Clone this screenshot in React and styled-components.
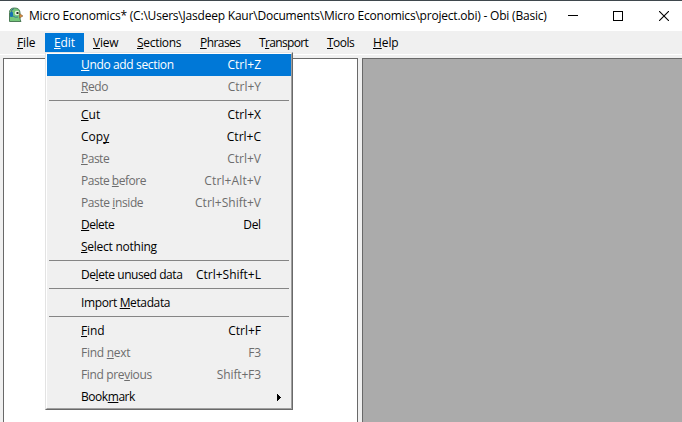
import React from "react";
import styled, { createGlobalStyle } from "styled-components";

const GlobalStyle = createGlobalStyle`
  * { box-sizing: border-box; }
  body {
    margin: 0;
    overflow: hidden;
    font: 12px/16px "Open Sans", "Noto Sans", sans-serif;
    color: #000;
  }
`;

const Window = styled.div`
  display: flex;
  flex-direction: column;
  width: 682px;
  height: 422px;
  background: #f0f0f0;
`;

const TitleBar = styled.header`
  display: flex;
  align-items: center;
  height: 31px;
  padding-left: 8px;
  background: #fff;
  border-top: 1px solid #3f484d;
`;

const AppIcon = styled.svg`
  flex: none;
  margin-bottom: 2px;
`;

const Title = styled.h1`
  flex: 1;
  min-width: 0;
  margin: 0 0 0 5px;
  font-size: 12px;
  line-height: 16px;
  font-weight: 400;
  white-space: nowrap;
  letter-spacing: ${(p) => p.$track}px;
`;

const Controls = styled.div`
  display: flex;
  flex: none;
  margin-right: -5px;
`;

const ControlButton = styled.button`
  display: grid;
  place-items: center;
  width: 46px;
  height: 30px;
  padding: 0;
  border: 0;
  background: none;
`;

const MenuBar = styled.nav`
  display: flex;
  height: 24px;
  padding: 2px 0 0 6px;
  border-bottom: 1px solid #fff;
`;

const MenuTab = styled.div`
  position: relative;
  width: ${(p) => p.$width}px;
  height: 19px;
  padding-left: ${(p) => p.$pad}px;
  line-height: 20px;
  white-space: nowrap;
  letter-spacing: ${(p) => p.$track}px;
  color: ${(p) => (p.$open ? "#fff" : "#000")};
  background: ${(p) => (p.$open ? "#0078d7" : "transparent")};
`;

const Key = styled.span`
  text-decoration: underline;
  text-decoration-thickness: 1px;
  text-underline-offset: 1px;
  text-decoration-skip-ink: none;
`;

const Menu = styled.div`
  position: absolute;
  z-index: 2;
  top: 19px;
  left: 0;
  width: 248px;
  border: 1px solid #e3e3e3;
  border-right-color: #696969;
  border-bottom-color: #696969;
  color: #000;
`;

const MenuInner = styled.div`
  border: 1px solid #fff;
  border-right-color: #a0a0a0;
  border-bottom-color: #a0a0a0;
  background: #f0f0f0;
`;

const MenuItem = styled.div`
  display: flex;
  justify-content: space-between;
  align-items: center;
  height: 22px;
  padding: 0 30px 0 34px;
  line-height: 22px;
  color: ${(p) => (p.$active ? "#fff" : p.$disabled ? "#6d6d6d" : "#000")};
  background: ${(p) => (p.$active ? "#0078d7" : "transparent")};
`;

const Label = styled.span`
  letter-spacing: ${(p) => p.$track || 0}px;
`;

const Shortcut = styled.span`
  letter-spacing: ${(p) => p.$track || 0}px;
  margin-right: ${(p) => -(p.$track || 0)}px;
`;

const Separator = styled.div`
  height: 1px;
  margin: 2px 2px 3px;
  background: #858585;
`;

const SubmenuArrow = styled.svg`
  margin-right: -20px;
`;

const Workspace = styled.main`
  display: flex;
  flex: 1;
  gap: 4px;
  padding: 3px 0 0 3px;
`;

const Pane = styled.section`
  width: ${(p) => (p.$wide ? "auto" : "355px")};
  flex: ${(p) => (p.$wide ? 1 : "none")};
  border: solid #696969;
  border-width: ${(p) => (p.$wide ? "1px 0 0 1px" : "1px 1px 0 1px")};
  background: ${(p) => (p.$wide ? "#ababab" : "#fff")};
`;

const mnemonic = (text) => {
  const i = text.indexOf("&");
  return (
    <>
      {text.slice(0, i)}
      <Key>{text[i + 1]}</Key>
      {text.slice(i + 2)}
    </>
  );
};

const tabs = [
  { text: "&File", width: 39, pad: 11, track: -0.15 },
  { text: "&Edit", width: 39, pad: 9, open: true, track: -0.1 },
  { text: "&View", width: 44, pad: 9, track: -0.2 },
  { text: "&Sections", width: 63, pad: 9, track: -0.3 },
  { text: "&Phrases", width: 59, pad: 9, track: -0.55 },
  { text: "T&ransport", width: 68, pad: 9, track: -0.65 },
  { text: "&Tools", width: 46, pad: 9, track: -0.5 },
  { text: "&Help", width: 44, pad: 9, track: -0.1 },
];

const items = [
  { text: "&Undo add section", key: "Ctrl+Z", active: true, track: -0.35 },
  { text: "&Redo", key: "Ctrl+Y", disabled: true, track: -0.45 },
  null,
  { text: "&Cut", key: "Ctrl+X" },
  { text: "Cop&y", key: "Ctrl+C" },
  { text: "&Paste", key: "Ctrl+V", disabled: true, track: -0.5 },
  { text: "Paste &before", key: "Ctrl+Alt+V", disabled: true, track: -0.48, keyTrack: 0.12 },
  { text: "Paste &inside", key: "Ctrl+Shift+V", disabled: true, track: -0.4 },
  { text: "&Delete", key: "Del", track: -0.5, keyTrack: -0.4 },
  { text: "&Select nothing", track: -0.25 },
  null,
  { text: "De&lete unused data", key: "Ctrl+Shift+L", track: -0.44 },
  null,
  { text: "Import &Metadata", track: -0.38 },
  null,
  { text: "&Find", key: "Ctrl+F", track: -0.1 },
  { text: "Find &next", key: "F3", disabled: true, track: -0.27, keyTrack: -0.4 },
  { text: "Find pre&vious", key: "Shift+F3", disabled: true, track: -0.35, keyTrack: -0.15 },
  { text: "Book&mark", submenu: true, track: -0.45 },
];

const BirdIcon = () => (
  <AppIcon width="16" height="16" viewBox="0 0 16 16">
    <path d="M1.5 14.5V5.5Q1.5 1 6.5 1Q12 1 12 6V11Q12 13 13 14.5Z" fill="#75c77b" stroke="#4d7c58" />
    <path d="M3.5 6Q3 2 6 1.5" fill="none" stroke="#35688a" strokeWidth="1" />
    <rect x="2" y="5" width="3" height="5" rx="1" fill="#1673b0" />
    <circle cx="9" cy="6" r="2.3" fill="#e9f4df" />
    <rect x="8.5" y="5" width="2" height="2" fill="#202a25" />
    <path d="M11.5 6.5L15 9L11.5 11Z" fill="#d28a3c" stroke="#7c5a35" strokeWidth=".5" />
    <path d="M5 9Q7 11 10 10" fill="none" stroke="#397e92" strokeWidth="1" />
  </AppIcon>
);

const EditMenu = () => (
  <Menu>
    <MenuInner>
      {items.map((item, i) =>
        item ? (
          <MenuItem key={i} $active={item.active} $disabled={item.disabled}>
            <Label $track={item.track}>{mnemonic(item.text)}</Label>
            {item.key && <Shortcut $track={item.keyTrack}>{item.key}</Shortcut>}
            {item.submenu && (
              <SubmenuArrow width="4" height="7" viewBox="0 0 4 7" shapeRendering="crispEdges">
                <path d="M0 0h1v1h1v1h1v1h1v1h-1v1h-1v1h-1v1h-1z" />
              </SubmenuArrow>
            )}
          </MenuItem>
        ) : (
          <Separator key={i} />
        )
      )}
    </MenuInner>
  </Menu>
);

export default function App() {
  return (
    <>
      <GlobalStyle />
      <Window>
        <TitleBar>
          <BirdIcon />
          <Title $track={-0.21}>
            Micro Economics* (C:\Users\Jasdeep Kaur\Documents\Micro Economics\project.obi) - Obi (Basic)
          </Title>
          <Controls>
            <ControlButton aria-label="Minimize">
              <svg width="12" height="10" shapeRendering="crispEdges"><path d="M2 4.5h10" stroke="#000" /></svg>
            </ControlButton>
            <ControlButton aria-label="Maximize">
              <svg width="10" height="10" shapeRendering="crispEdges"><path d="M.5.5h9v9h-9z" fill="none" stroke="#000" /></svg>
            </ControlButton>
            <ControlButton aria-label="Close">
              <svg width="10" height="10"><path d="M0 0L10 10M10 0L0 10" stroke="#000" strokeWidth="1.1" /></svg>
            </ControlButton>
          </Controls>
        </TitleBar>
        <MenuBar>
          {tabs.map((tab) => (
            <MenuTab key={tab.text} $width={tab.width} $pad={tab.pad} $open={tab.open} $track={tab.track || 0}>
              {mnemonic(tab.text)}
              {tab.open && <EditMenu />}
            </MenuTab>
          ))}
        </MenuBar>
        <Workspace>
          <Pane />
          <Pane $wide />
        </Workspace>
      </Window>
    </>
  );
}
